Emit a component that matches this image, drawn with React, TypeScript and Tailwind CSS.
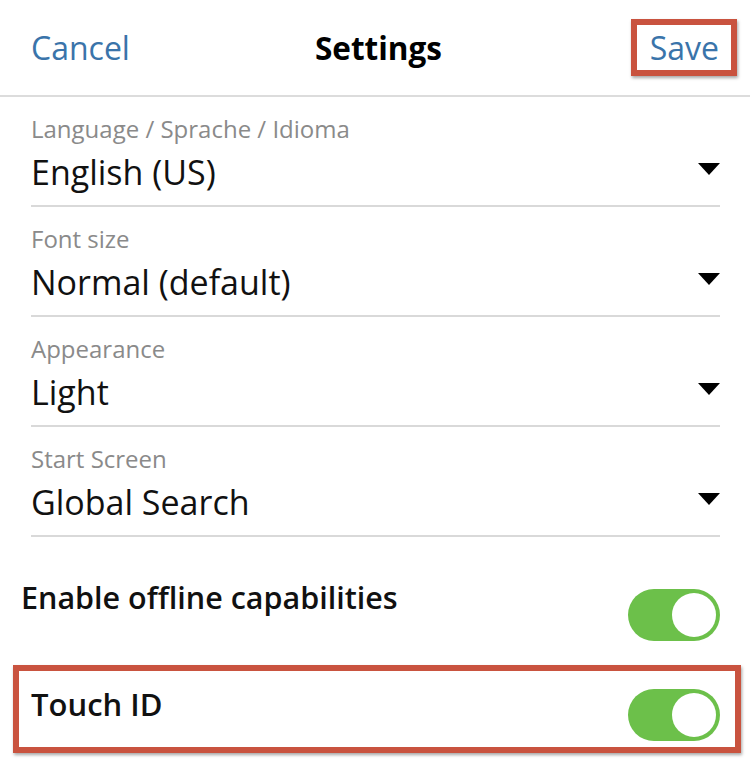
import React from "react";

type SelectRowProps = {
  label: string;
  value: string;
};

const SelectRow: React.FC<SelectRowProps> = ({ label, value }) => (
  <div className="h-[110px] border-b-2 border-[#d9d9d9] flex flex-col pt-[17px]">
    <span className="text-[24px] leading-[30px] text-[#8a8a8a]">{label}</span>
    <div className="flex items-center justify-between">
      <span className="text-[34px] leading-[56px] text-[#111]">{value}</span>
      <svg width="22" height="13" viewBox="0 0 22 13" className="mb-[6px]">
        <path d="M0 0 H22 L11 12 Z" fill="#000" />
      </svg>
    </div>
  </div>
);

const Toggle: React.FC = () => (
  <div className="w-[92px] h-[52px] rounded-full bg-[#6cc04a] flex items-center justify-end pr-[4px]">
    <div className="w-[44px] h-[44px] rounded-full bg-white" />
  </div>
);

const App: React.FC = () => {
  return (
    <div
      className="w-[750px] h-[767px] bg-white overflow-hidden"
      style={{ fontFamily: '"Open Sans", "Noto Sans", sans-serif' }}
    >
      <header className="h-[97px] border-b-2 border-[#dcdcdc] flex items-center pl-[31px] pr-[13px]">
        <button className="text-[32px] leading-[44px] text-[#3a74aa]">Cancel</button>
        <h1 className="text-[31.5px] leading-[44px] font-bold text-black ml-[185px]">Settings</h1>
        <div className="ml-auto border-[6px] border-[#c9533f] shadow-[1px_2px_3px_rgba(0,0,0,0.35)] pl-[13px] pr-[12px] h-[57px] flex items-center">
          <button className="text-[32px] leading-[44px] text-[#3a74aa]">Save</button>
        </div>
      </header>

      <div className="pl-[31px] pr-[30px]">
        <SelectRow label="Language / Sprache / Idioma" value="English (US)" />
        <SelectRow label="Font size" value="Normal (default)" />
        <SelectRow label="Appearance" value="Light" />
        <SelectRow label="Start Screen" value="Global Search" />
      </div>

      <div className="flex items-start justify-between pl-[21px] pr-[30px] pt-[40px]">
        <span className="text-[30.5px] leading-[40px] font-semibold text-[#111]">
          Enable offline capabilities
        </span>
        <div className="mt-[12px]">
          <Toggle />
        </div>
      </div>

      <div className="ml-[13px] mr-[9px] mt-[24px] border-[6px] border-[#c9533f] shadow-[1px_2px_3px_rgba(0,0,0,0.35)] h-[88px] flex items-center justify-between pl-[12px] pr-[15px]">
        <span className="text-[31px] leading-[40px] font-semibold text-[#111] -mt-[10px]">Touch ID</span>
        <div className="mt-[12px]">
          <Toggle />
        </div>
      </div>
    </div>
  );
};

export default App;
